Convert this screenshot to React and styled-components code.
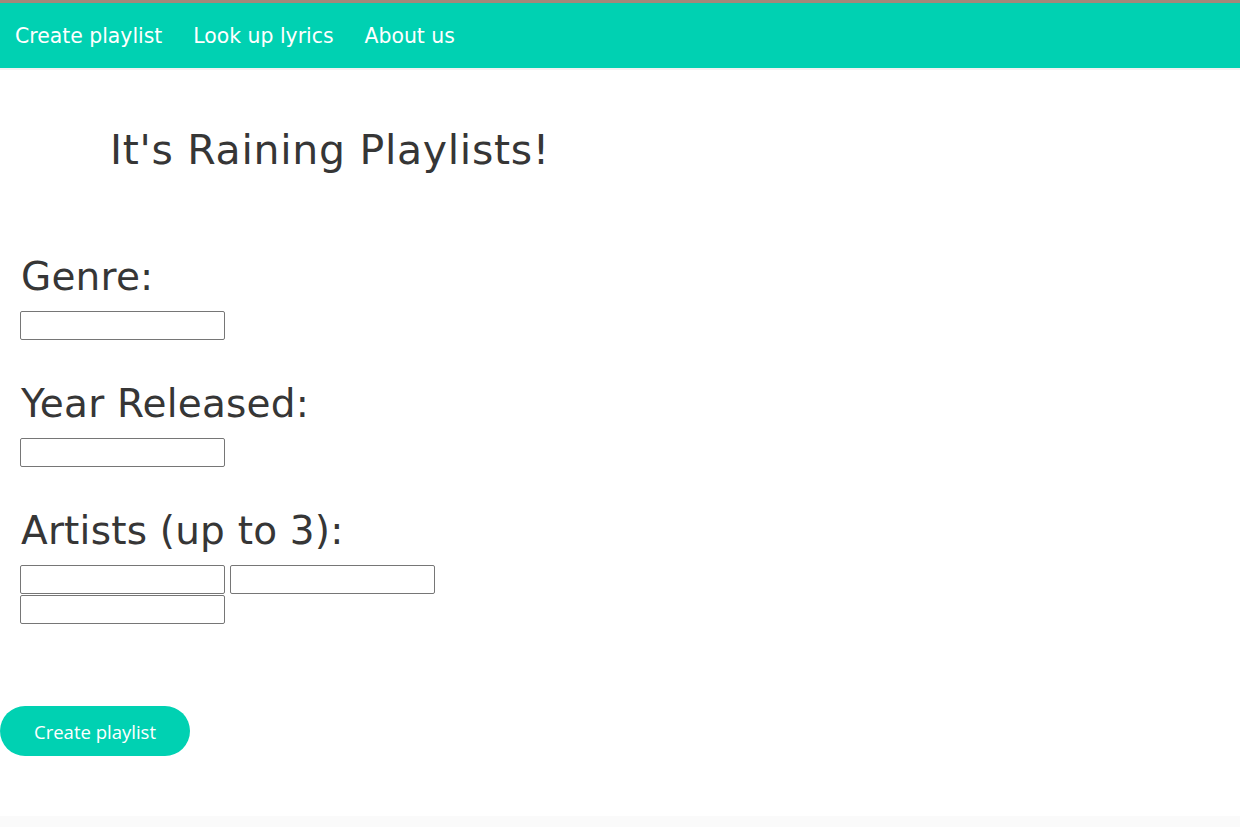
import React from 'react';
import styled, { createGlobalStyle } from 'styled-components';

const GlobalStyle = createGlobalStyle`
  html, body {
    margin: 0;
    padding: 0;
    background: #fafafa;
  }
  body {
    font-family: "DejaVu Sans", "Liberation Sans", sans-serif;
    color: #363636;
  }
`;

const Page = styled.div`
  background: #fff;
  border-top: 3px solid #a3887a;
  padding-bottom: 60px;
`;

const Navbar = styled.nav`
  display: flex;
  align-items: center;
  gap: 31px;
  height: 65px;
  padding: 0 15px;
  background: #00d1b2;
  box-shadow: 0 2px 0 #f2f2f2;
`;

const NavLink = styled.a`
  color: #fff;
  font-family: "DejaVu Sans", sans-serif;
  font-size: 20.4px;
  text-decoration: none;
  cursor: pointer;
`;

const Title = styled.h1`
  margin: 54px 0 0 110px;
  font-family: "DejaVu Sans", sans-serif;
  font-size: 41px;
  font-weight: normal;
  letter-spacing: 0.7px;
  line-height: 56px;
  color: #363636;
`;

const Form = styled.form`
  padding: 74px 20px 0;
`;

const Field = styled.div`
  & + & {
    margin-top: 38px;
  }
`;

const Label = styled.h2`
  margin: 0 0 10px 1px;
  font-family: "DejaVu Sans", sans-serif;
  font-size: 39px;
  font-weight: normal;
  letter-spacing: 0.2px;
  line-height: 49px;
  color: #363636;
`;

const Inputs = styled.div`
  width: 420px;
  line-height: 0;
`;

const Input = styled.input`
  box-sizing: border-box;
  width: 205px;
  height: 29px;
  margin: 0 5px 1px 0;
  border: 1px solid #767676;
  border-radius: 2px;
  padding: 2px 4px;
  font-size: 14px;
  vertical-align: top;
`;

const Button = styled.button`
  display: block;
  width: 190px;
  height: 50px;
  margin-top: 81px;
  border: none;
  border-radius: 25px;
  background: #00d1b2;
  color: #fff;
  font-family: "Open Sans", sans-serif;
  font-size: 18.5px;
  cursor: pointer;
`;

const App = () => (
  <>
    <GlobalStyle />
    <Page>
      <Navbar>
        <NavLink>Create playlist</NavLink>
        <NavLink>Look up lyrics</NavLink>
        <NavLink>About us</NavLink>
      </Navbar>
      <Title>It's Raining Playlists!</Title>
      <Form onSubmit={e => e.preventDefault()}>
        <Field>
          <Label>Genre:</Label>
          <Inputs><Input type="text" /></Inputs>
        </Field>
        <Field>
          <Label>Year Released:</Label>
          <Inputs><Input type="text" /></Inputs>
        </Field>
        <Field>
          <Label>Artists (up to 3):</Label>
          <Inputs>
            <Input type="text" />
            <Input type="text" />
            <Input type="text" />
          </Inputs>
        </Field>
      </Form>
      <Button type="button">Create playlist</Button>
    </Page>
  </>
);

export default App;
